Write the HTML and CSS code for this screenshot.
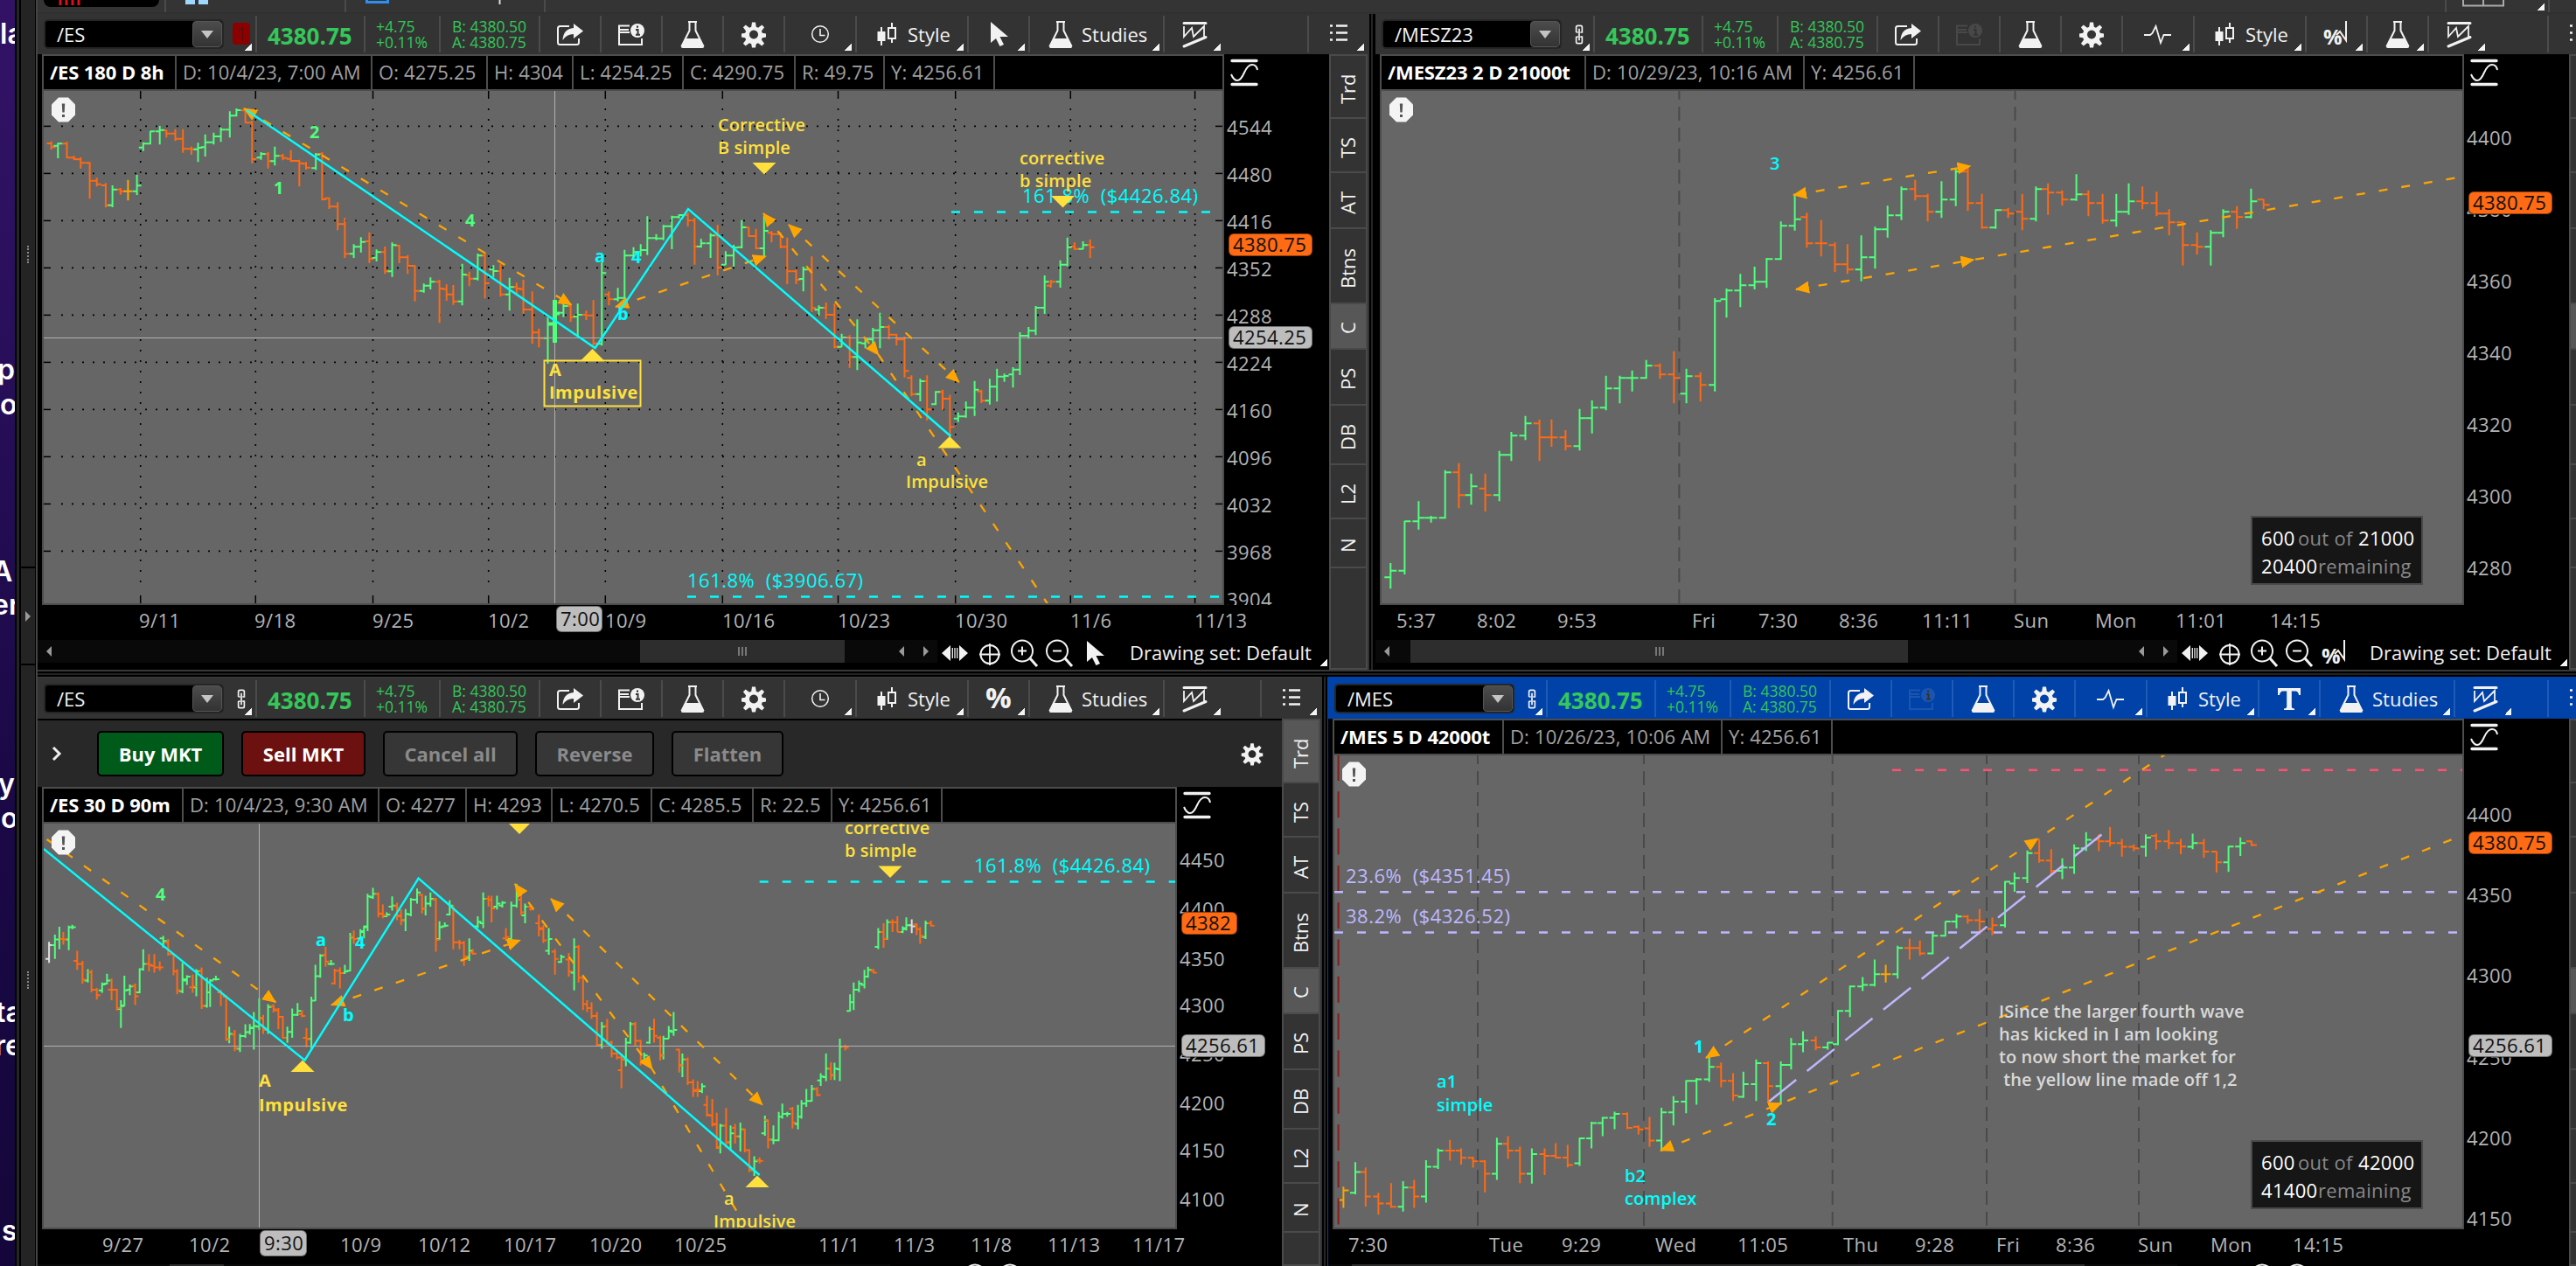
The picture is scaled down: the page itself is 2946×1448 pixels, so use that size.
FILE: index.html
```html
<!DOCTYPE html>
<html lang="en">

<head>
    <meta charset="utf-8">
    <title>Charts</title>
    <link rel="stylesheet" href="styles.css">
</head>

<body>
    <svg class="defs" width="0" height="0">
        <symbol id="i-share" viewBox="0 0 32 32">
            <path d="M15 7H4.500Q2 7 2 9.500V25.500Q2 28 4.500 28H23.500Q26 28 26 25.500V21" fill="none" stroke="currentColor" stroke-width="2" />
            <path d="M20 4L31 12.500L20 21V16Q12 16 7.500 23Q8 10 20 9Z" fill="currentColor" />
        </symbol>
        <symbol id="i-info" viewBox="0 0 32 32">
            <path d="M14 6.500H2V28H28V21M3 11H13M3 14H14" fill="none" stroke="currentColor" stroke-width="2" />
            <circle cx="23" cy="12" r="8" fill="currentColor" />
            <path d="M23 6.500V8.800M21 11H23.500V16.500M21 16.700H26" fill="none" stroke="#333" stroke-width="2" />
        </symbol>
        <symbol id="i-flask" viewBox="0 0 32 32">
            <path d="M11 2H21M12.500 2V12L4 29H28L19.500 12V2" fill="none" stroke="currentColor" stroke-width="2" />
            <path d="M7.500 21H24.500L29 30.500Q29 32 27 32H5Q3 32 3 30.500Z" fill="currentColor" />
        </symbol>
        <symbol id="i-gear" viewBox="0 0 32 32">
            <path fill-rule="evenodd" fill="currentColor" d="M14 2.500h4l.8 5.300 2.200.9 4.300-3.200 2.800 2.800-3.200 4.300.9 2.200 4.200.7v4l-4.200.7-.9 2.200 3.200 4.300-2.800 2.800-4.300-3.200-2.200.9-.8 4.300h-4l-.8-4.300-2.200-.9-4.300 3.200-2.800-2.800 3.200-4.300-.9-2.200-4.200-.7v-4l4.200-.7.9-2.200-3.200-4.300 2.800-2.800 4.300 3.200 2.200-.9zM16 11.500a5 5 0 1 0 .01 0z" />
        </symbol>
        <symbol id="i-clock" viewBox="0 0 32 32">
            <circle cx="16" cy="16" r="9.300" fill="none" stroke="currentColor" stroke-width="1.500" />
            <path d="M16 10V17.500H21.500" fill="none" stroke="currentColor" stroke-width="1.600" />
        </symbol>
        <symbol id="i-pulse" viewBox="0 0 32 32">
            <path d="M0 17H7L9.500 15L13.500 7L19 26L22.500 17H31" fill="none" stroke="currentColor" stroke-width="1.800" />
        </symbol>
        <symbol id="i-candle" viewBox="0 0 24 32">
            <path d="M6 8V29M18 3V9M18 21V26" stroke="currentColor" stroke-width="2" />
            <path d="M1.500 13H10.500V24H1.500Z" fill="currentColor" />
            <path d="M14 9H22V21H14Z" fill="none" stroke="currentColor" stroke-width="2" />
        </symbol>
        <symbol id="i-cursor" viewBox="0 0 32 32">
            <path d="M7 2V26L13 21L17.500 30L22 28L17.500 19H27Z" fill="currentColor" />
        </symbol>
        <symbol id="i-percent" viewBox="0 0 32 32">
            <text x="1" y="27" font-size="33" font-weight="700" fill="currentColor">%</text>
        </symbol>
        <symbol id="i-pctline" viewBox="0 0 32 32">
            <text x="1" y="28" font-size="24" font-weight="700" fill="currentColor">%</text>
            <path d="M16 17L20 13L27 23V1" fill="none" stroke="currentColor" stroke-width="2" />
        </symbol>
        <symbol id="i-text" viewBox="0 0 32 32">
            <path d="M3 4H29V12H27Q26.500 7.500 23 7.500H18.800V25Q18.800 27.500 22 27.500V29H10V27.500Q13.200 27.500 13.200 25V7.500H9Q5.500 7.500 5 12H3Z" fill="currentColor" />
        </symbol>
        <symbol id="i-pattern" viewBox="0 0 32 32">
            <path d="M4 3.500H29M4 30L29 19.500" stroke="currentColor" stroke-width="3" stroke-linecap="round" />
            <path d="M4 7V19L13 9L15 19L27 7V19" fill="none" stroke="currentColor" stroke-width="1.800" />
        </symbol>
        <symbol id="i-list" viewBox="0 0 32 32">
            <path d="M6 6.500H9M13 6.500H26M6 14.500H9M13 14.500H26M6 22.500H9M13 22.500H26" stroke="currentColor" stroke-width="2.500" />
        </symbol>
        <symbol id="i-chain" viewBox="0 0 16 32">
            <path d="M4 13V6Q4 4 6 4H10Q12 4 12 6V13H9.500M4 13H6.500M4 19V26Q4 28 6 28H10Q12 28 12 26V19H9.500M4 19H6.500M8 8V24" fill="none" stroke="currentColor" stroke-width="2" />
        </symbol>
        <symbol id="i-scale" viewBox="0 0 32 32">
            <path d="M2 2.500H30M2 29.500H30" stroke="currentColor" stroke-width="3.400" stroke-linecap="round" />
            <path d="M1 18Q4 25 8 25Q12 25 16 16T25 7Q30 7 31 13" fill="none" stroke="currentColor" stroke-width="2" />
        </symbol>
        <symbol id="i-resize" viewBox="0 0 32 32">
            <path d="M11 7V25L1 16ZM21 7V25L31 16Z" fill="currentColor" />
            <path d="M13.300 10V22M16 10V22M18.700 10V22" stroke="currentColor" stroke-width="1.300" />
        </symbol>
        <symbol id="i-target" viewBox="0 0 32 32">
            <circle cx="16" cy="17.500" r="10.500" fill="none" stroke="currentColor" stroke-width="2" />
            <path d="M16 5V30M4 17.500H28" stroke="currentColor" stroke-width="1.800" />
        </symbol>
        <symbol id="i-zoomin" viewBox="0 0 32 32">
            <circle cx="13" cy="13.500" r="12" fill="none" stroke="currentColor" stroke-width="2" />
            <path d="M22 22L30 31" stroke="currentColor" stroke-width="3" />
            <path d="M8 13.500H18M13 8.500V18.500" stroke="currentColor" stroke-width="2" />
        </symbol>
        <symbol id="i-zoomout" viewBox="0 0 32 32">
            <circle cx="13" cy="13.500" r="12" fill="none" stroke="currentColor" stroke-width="2" />
            <path d="M22 22L30 31" stroke="currentColor" stroke-width="3" />
            <path d="M8 13.500H18" stroke="currentColor" stroke-width="2" />
        </symbol>
        <marker id="arrow" markerUnits="userSpaceOnUse" markerWidth="16" markerHeight="16" viewBox="0 0 16 16" refX="15" refY="8" orient="auto-start-reverse">
            <path d="M0 1L16 8L0 15Z" fill="#ffa500" />
        </marker>
    </svg>

    <div class="screen">
        <svg class="desktop" width="17" height="1448">
            <g id="desktop-text"></g>
        </svg>
        <div class="edge"></div>
        <div class="rail">
            <div class="rail-part rail-a"><i class="dots"></i></div>
            <div class="rail-part rail-b"><i class="arrow"></i></div>
            <div class="rail-part rail-c"><i class="dots"></i></div>
        </div>

        <div class="app">
            <div class="topbar">
                <span class="top-tab"><i class="rec"><svg width="32" height="6"><path d="M5 0V6M12 0V6M19 0V6M26 0V6" stroke="#d11" stroke-width="3" /></svg></i></span>
                <span class="top-cell"><svg width="30" height="6"><path d="M0 0H11V5H0ZM15 0H26V5H15Z" fill="#9fd8ff" /></svg></span>
                <span class="top-cell top-chart"><svg width="160" height="6"><path d="M1.500 -4V2.500H25.500V-4" fill="none" stroke="#2f8ff0" stroke-width="3" /><path d="M153.500 0V5" stroke="#ddd" stroke-width="2" /></svg></span>
                <span class="top-cell top-fill"></span>
                <span class="top-cell top-grid"><svg width="50" height="8"><path d="M1 0V6.500H47V0M24 0V6" fill="none" stroke="#aaa" stroke-width="2" /></svg><i class="tri"></i></span>
                <span class="top-cell top-last"></span>
            </div>
            <div class="row row-top">
                <section class="panel p1" id="p1"></section>
                <div class="gutter"></div>
                <section class="panel p2" id="p2"></section>
            </div>
            <div class="split"></div>
            <div class="row row-bottom">
                <section class="panel p3" id="p3"></section>
                <div class="gutter"></div>
                <section class="panel p4 active" id="p4"></section>
            </div>
        </div>
    </div>

    <script src="charts.js"></script>
</body>

</html>
```

FILE: styles.css
```css
* {
    box-sizing: border-box;
}

body {
    margin: 0;
    background: #000;
    color: #f2f2f2;
    font-family: "Open Sans", "Noto Sans", sans-serif;
    font-size: 22px;
    overflow: hidden;
}

.defs {
    position: absolute;
}

.screen {
    display: flex;
    width: 2946px;
    height: 1448px;
    overflow: hidden;
}

.desktop {
    flex: none;
    background: linear-gradient(#331266, #2a0f5c 25%, #1b0947 60%, #14063a);
    font-family: Inter, sans-serif;
    font-weight: 600;
    font-size: 32px;
    fill: #fff;
}

.edge {
    flex: none;
    width: 7px;
    background: #252525;
    border: solid #000;
    border-width: 0 2px;
}

/* narrow sidebar grips */
.rail {
    flex: none;
    width: 17px;
    padding-right: 1px;
    display: flex;
    flex-direction: column;
    gap: 2px;
    background: #000;
}

.rail-part {
    background: #242424;
    display: flex;
    justify-content: center;
}

.rail-a { height: 648px; padding-top: 281px; }
.rail-b { height: 109px; padding-top: 49px; }
.rail-c { flex: 1; padding-top: 350px; }

.dots {
    height: 20px;
    border-left: 2px dotted #888;
}

.arrow {
    border: 6px solid transparent;
    border-left-color: #999;
    border-right-width: 0;
    height: 12px;
}

.app {
    flex: 1;
    min-width: 0;
    border-left: 2px solid #444;
    display: flex;
    flex-direction: column;
}

.topbar {
    flex: none;
    height: 16px;
    display: flex;
    background: #343434;
    border-bottom: 2px solid #303030;
}

.topbar svg {
    display: block;
}

.top-tab {
    width: 145px;
    padding-left: 7px;
}

.rec {
    display: block;
    width: 132px;
    height: 8px;
    background: #000;
    border-radius: 0 0 8px 8px;
    padding-left: 14px;
}

.top-cell {
    position: relative;
    border-left: 2px solid #4a4a4a;
    width: 206px;
    padding-left: 22px;
}

.top-chart { width: 228px; }
.top-fill { width: 2174px; }
.top-grid { width: 118px; padding-left: 18px; }
.top-last { flex: 1; }

.row {
    display: flex;
}

.row-top { height: 750px; }
.row-bottom { height: 674px; }

.split {
    height: 8px;
    background: linear-gradient(#383838 2px, #000 2px, #000 4px, #222 4px, #222 6px, #000 6px);
}

.gutter {
    flex: none;
    width: 9px;
    background: linear-gradient(90deg, #333 2px, #000 2px, #000 4px, #252525 4px, #252525 6px, #000 6px);
}

.panel {
    flex: none;
    display: flex;
    flex-direction: column;
    overflow: hidden;
    background: #000;
}

.p1 { width: 1521px; }
.p2 { width: 1373px; }
.p3 { width: 1467px; }
.p4 { width: 1427px; }

.active {
    border-left: 1px solid #0042a8;
    margin-left: -1px;
    width: 1428px;
}

/* toolbar */
.toolbar {
    flex: none;
    display: flex;
    height: 46px;
    padding: 2px 0;
    background: #333;
}

/* the right hand panels run off the screen */
.p2 .toolbar { width: 1409px; }
.p4 .toolbar { width: 1463px; }

.row-bottom .toolbar {
    height: 48px;
    border-top: 1px solid #3c3c3c;
    padding-top: 3px;
}

.active .toolbar {
    background: #0042a8;
    border-color: #0042a8;
}

.cell {
    position: relative;
    flex: none;
    width: 70px;
    border-left: 2px solid #4b4b4b;
    display: flex;
    align-items: center;
    justify-content: center;
    white-space: nowrap;
}

.active .cell {
    border-color: #1f5ab5;
}

.cell svg {
    width: 32px;
    height: 32px;
}

.cell.sym {
    width: 249px;
    border: 0;
    padding: 4px 0 4px 7px;
    justify-content: flex-start;
    align-items: stretch;
}

.field {
    width: 206px;
    background: #000;
    border: 2px solid #262626;
    border-radius: 5px;
    padding-left: 13px;
    display: flex;
    justify-content: space-between;
    align-items: center;
}

.drop {
    width: 34px;
    height: 30px;
    border: 1px solid #555;
    border-radius: 4px;
    background: linear-gradient(#4c4c4c, #333);
    display: flex;
    align-items: center;
    justify-content: center;
}

.drop::after {
    content: "";
    border: 7.500px solid transparent;
    border-top: 9px solid #c4c4c4;
    border-bottom: 0;
}

.link {
    width: 20px;
    margin: 4px 0 5px 10px;
}

.cell .link svg {
    width: 14px;
    height: 27px;
    margin-left: 3px;
    display: block;
}

.link.red {
    background: #8c0000;
    border-radius: 4px;
    color: #5a1010;
    text-align: center;
    line-height: 24px;
}

.tri {
    position: absolute;
    right: 4px;
    bottom: 2px;
    width: 8px;
    height: 8px;
    background: linear-gradient(135deg, transparent 50%, #f4f4f4 50%);
}

.cell.price {
    width: 124px;
    font-size: 26px;
    font-weight: 700;
    color: #35c759;
    padding-top: 3px;
    justify-content: flex-start;
    padding-left: 12px;
}

.cell.quote {
    width: 86px;
    padding-left: 12px;
    justify-content: flex-start;
    font-size: 17.500px;
    line-height: 18px;
    color: #35c759;
}

.cell.bid { width: 114px; padding-left: 13px; }
.cell.off { color: #484848; }
.active .cell.off { color: #1c55b0; }
.cell.mode { width: 82px; }

.cell.style {
    width: 128px;
    justify-content: flex-start;
    padding-left: 22px;
    gap: 12px;
}

.cell.style svg {
    width: 24px;
}

.cell.studies {
    width: 154px;
    justify-content: flex-start;
    padding-left: 19px;
    gap: 8px;
}

.spacer {
    flex: 1;
}

.cell.list { width: 69px; }

/* order entry */
.orders {
    flex: none;
    display: flex;
    align-items: center;
    height: 78px;
    background: #282828;
    border-top: 2px solid #000;
    padding: 0 20px 0 16px;
    gap: 20px;
}

.orders .chev {
    width: 32px;
}

.btn {
    height: 52px;
    border: 2px solid #000;
    border-radius: 5px;
    display: flex;
    align-items: center;
    justify-content: center;
    font-weight: 700;
    background: #363636;
    color: #8a8a8a;
    width: 154px;
}

.buy { background: #005a1a; color: #fff; width: 145px; }
.sell { background: #6c1010; color: #fff; width: 142px; }
.reverse { width: 136px; }
.flatten { width: 128px; }

.orders .gear {
    width: 28px;
    height: 28px;
    margin-left: auto;
}

.body {
    flex: 1;
    display: flex;
    min-height: 0;
}

.main {
    flex: 1;
    min-width: 0;
    display: flex;
    flex-direction: column;
}

.p2 .main { flex: none; width: 1365px; }
.p4 .main { flex: none; width: 1419px; }

.head {
    flex: none;
    display: flex;
    justify-content: space-between;
    height: 42px;
    padding-left: 5px;
}

.legend {
    flex: 1;
    display: flex;
    border: 2px solid #4d4d4d;
    color: #a0a0a0;
}

.legend span {
    border-right: 2px solid #4d4d4d;
    padding-left: 7px;
    line-height: 36px;
    white-space: nowrap;
    letter-spacing: .15px;
}

.legend span:first-child {
    color: #fff;
    font-weight: 700;
    letter-spacing: -.1px;
}

.scale {
    width: 120px;
    padding: 5px 0 0 7px;
}

.scale svg {
    width: 32px;
    height: 32px;
    display: block;
}

.plot {
    flex: none;
    display: block;
    margin-left: 5px;
}

.axis-text {
    letter-spacing: .42px;
    fill: #b4b4b4;
}

.level {
    letter-spacing: .5px;
}

.note {
    font-size: 20px;
    font-weight: 600;
    letter-spacing: .08px;
}

.strong {
    font-weight: 700;
    letter-spacing: .5px;
}

.foot {
    flex: none;
    display: flex;
    height: 34px;
}

.scrollbar {
    position: relative;
    flex: 1;
    height: 26px;
    background: #090909;
}

.thumb {
    height: 26px;
    background: #2d2d2d;
    display: flex;
    align-items: center;
    justify-content: center;
    gap: 2px;
}

.thumb i {
    width: 2px;
    height: 10px;
    background: #777;
}

.sb {
    position: absolute;
    top: 7px;
    border: 6px solid transparent;
    border-left-width: 0;
    border-right-color: #999;
}

.sb-first { left: 10px; }
.sb-prev { right: 38px; }
.sb-next { right: 10px; transform: scaleX(-1); }

.tools {
    display: flex;
    position: relative;
    width: 448px;
    height: 34px;
}

.tools svg {
    width: 32px;
    height: 32px;
    margin: -1px 4px;
}

.tools span {
    margin-left: 20px;
    line-height: 28px;
}

.tools .tri {
    right: 2px;
    bottom: 4px;
}

/* vertical tabs */
.tabs {
    flex: none;
    width: 44px;
    background: #333;
    border: 2px solid #4a4a4a;
}

.tab {
    border-top: 2px solid #4a4a4a;
    writing-mode: vertical-rl;
    transform: rotate(180deg);
    width: 40px;
    line-height: 38px;
    text-align: center;
    padding-bottom: 8px;
}

/* rotated, so bottom padding pushes the label down */
.tab {
    padding-bottom: 0;
    padding-top: 0;
    text-indent: -5px;
}

.tab.on { background: #575757; }
.t72 { height: 72px; }
.t62 { height: 62px; }
.t64 { height: 64px; }
.t86 { height: 86px; }
.t52 { height: 52px; }
.t68 { height: 68px; }
.t56 { height: 56px; }
```

FILE: charts.js
```js
var COLORS = { g: '#50ff7d', o: '#ff6a14', y: '#ffa500', w: '#dddddd' };
var YEL = '#ffe03c', CY = '#00ffff', GR = '#50ff7d', LAV = '#bdb8ff', ORG = '#ffa500';

function icon(name) {
    return '<svg><use href="#i-' + name + '"/></svg>';
}

function cell(cls, html, tri) {
    return '<div class="cell ' + cls + '">' + html + (tri ? '<i class="tri"></i>' : '') + '</div>';
}

function toolbar(p) {
    var link = p.red ? '<span class="link red">1</span>' : '<span class="link">' + icon('chain') + '</span>';
    return '<div class="toolbar">' +
        cell('sym', '<div class="field">' + p.symbol + '<i class="drop"></i></div>' + link, true) +
        cell('price', '4380.75') +
        cell('quote', '+4.75<br>+0.11%') +
        cell('quote bid', 'B: 4380.50<br>A: 4380.75') +
        cell('', icon('share')) +
        cell(p.info ? '' : 'off', icon('info')) +
        cell('', icon('flask')) +
        cell('', icon('gear')) +
        cell('mode', icon(p.mode), true) +
        cell('style', icon('candle') + 'Style', true) +
        cell('', icon(p.tool), true) +
        (p.studies ? cell('studies', icon('flask') + 'Studies', true) : cell('', icon('flask'), true)) +
        cell('', icon('pattern'), true) +
        '<div class="spacer"></div>' +
        cell('list', icon('list'), true) +
        '</div>';
}

// bars: "colour x high low open close", one run shares an origin and a scale
function drawBars(runs, tick) {
    var paths = {};
    runs.forEach(function (run) {
        run.bars.trim().split(/\s*[;\n]\s*/).forEach(function (line) {
            var v = line.split(' ');
            if (v.length < 6) return;
            var x = (run.x + v[1] / run.sx).toFixed(1) * 1;
            var y = v.slice(2).map(function (n) { return (run.y + n / run.sy).toFixed(1) * 1; });
            paths[v[0]] = (paths[v[0]] || '') + 'M' + x + ' ' + y[0] + 'V' + y[1] +
                'M' + (x - tick) + ' ' + y[2] + 'H' + x + 'M' + x + ' ' + y[3] + 'H' + (x + tick);
        });
    });
    return Object.keys(paths).map(function (k) {
        return '<path d="' + paths[k] + '" fill="none" stroke="' + COLORS[k] + '" stroke-width="2"/>';
    }).join('');
}

function line(x1, y1, x2, y2, color, w, extra) {
    return '<line x1="' + x1 + '" y1="' + y1 + '" x2="' + x2 + '" y2="' + y2 + '" stroke="' + color +
        '" stroke-width="' + w + '" ' + (extra || '') + '/>';
}

function dashed(x1, y1, x2, y2, color) {
    return line(x1, y1, x2, y2, color, 2.5, 'stroke-dasharray="10 16"');
}

// trend line with a head at both ends, optionally extended to the right
function trend(x1, y1, x2, y2, ex, ey) {
    return line(x1, y1, x2, y2, ORG, 2.3, 'stroke-dasharray="10 16" marker-start="url(#arrow)" marker-end="url(#arrow)"') +
        (ex ? line(x2, y2, ex, ey, ORG, 2.3, 'stroke-dasharray="10 16" stroke-dashoffset="' + Math.hypot(x2 - x1, y2 - y1).toFixed(1) + '"') : '');
}

function text(x, y, s, color, cls) {
    return '<text x="' + x + '" y="' + y + '" fill="' + color + '" class="' + (cls || '') + '" xml:space="preserve">' + s + '</text>';
}

function level(x, y, s, color) {
    return text(x, y, s, color, 'level');
}

function note(x, y, s, color, bold) {
    return text(x, y, s, color, 'note' + (bold ? ' strong' : ''));
}

function poly(pts, color) {
    return '<polyline points="' + pts + '" fill="none" stroke="' + color + '" stroke-width="2.4"/>';
}

// yellow markers, (x, y) is the tip
function up(x, y) {
    return '<path d="M' + x + ' ' + y + 'l13.500 13.500h-27z" fill="' + YEL + '"/>';
}

function down(x, y) {
    return '<path d="M' + x + ' ' + y + 'l13.500 -13.500h-27z" fill="' + YEL + '"/>';
}

function badge(x, y, w, h, s, color) {
    return '<rect x="' + (x + 1) + '" y="' + (y + 1) + '" width="' + (w - 2) + '" height="' + (h - 2) + '" rx="6" fill="' + color +
        '" stroke="#0006" stroke-width="2"/><text x="' + (x + 6) + '" y="' + (y + h / 2 + 8) + '" fill="#111" letter-spacing=".42">' + s + '</text>';
}

function remaining(x, y, total, left) {
    return '<rect x="' + (x + 1) + '" y="' + (y + 1) + '" width="195" height="77" fill="#161616" stroke="#4a4a4a" stroke-width="2"/>' +
        '<g letter-spacing=".3">' +
        text(x + 12, y + 34, '600', '#fff') + text(x + 54, y + 34, 'out of', '#888') + text(x + 123, y + 34, total, '#fff') +
        text(x + 12, y + 66, left, '#fff') + text(x + 77, y + 66, 'remaining', '#888') + '</g>';
}

function plot(p) {
    var b = p.box, out = '', w = b.r - b.x, h = b.b - b.y;
    out += '<rect x="' + (b.x - 2) + '" y="' + (b.y - 2) + '" width="' + (w + 4) + '" height="' + (h + 4) + '" fill="#4d4d4d"/>';
    out += '<svg x="' + b.x + '" y="' + b.y + '" width="' + w + '" height="' + h + '" viewBox="' + [b.x, b.y, w, h].join(' ') + '">';
    out += '<rect x="' + b.x + '" y="' + b.y + '" width="' + w + '" height="' + h + '" fill="#666"/>';
    (p.gridX || []).forEach(function (x) {
        out += line(x, b.y, x, b.y + 9, '#000', 1.5) + line(x, b.b - 9, x, b.b, '#000', 1.5) +
            line(x, b.y + 20, x, b.b - 14, '#000', 1.6, 'stroke-dasharray="2 10"');
    });
    (p.gridY || []).forEach(function (y) {
        out += line(b.x, y, b.x + 8, y, '#000', 1.5) + line(b.r - 8, y, b.r, y, '#000', 1.5) +
            line(b.x + 20, y, b.r - 20, y, '#000', 1.6, 'stroke-dasharray="2 10"');
    });
    (p.days || []).forEach(function (x) {
        out += line(x, b.y, x, b.b, '#4a4a4a', 2, 'stroke-dasharray="16 8" stroke-dashoffset="6"');
    });
    out += drawBars(p.runs, p.tick);
    if (p.cross) {
        out += line(p.cross[0], b.y, p.cross[0], b.b, '#b0b0b0', 1) + line(b.x, p.cross[1], b.r, p.cross[1], '#b0b0b0', 1);
    }
    out += p.drawings;
    // alert octagon
    out += '<g transform="translate(' + (b.x + 9) + ' ' + (b.y + 7.5) + ')"><path d="M8 0H19L27 8V20L19 28H8L0 20V8Z" fill="#f4f4f4"/>' +
        '<path d="M11.800 7H15.200L14.700 17H12.300ZM12 19.500H15V22.500H12Z" fill="#555"/></g>';
    out += '</svg><g class="axis-text">';
    // last y label can run past the plot, so keep it inside the price axis
    out += '<svg x="' + b.r + '" y="' + b.y + '" width="140" height="' + (h + 2) + '" viewBox="' + [b.r, b.y, 140, h + 2].join(' ') + '">';
    p.yLabels.forEach(function (l) {
        out += '<text x="' + (b.r + 5) + '" y="' + (l[1] + 8) + '">' + l[0] + '</text>';
    });
    out += '</svg>';
    p.xLabels.forEach(function (l) {
        out += '<text x="' + (l[1] - 1) + '" y="' + (b.b + 28) + '">' + l[0] + '</text>';
    });
    out += '</g>' + p.badges;
    var W = p.right - b.x + 2, H = h + 42;
    return '<svg class="plot" width="' + W + '" height="' + H + '" viewBox="' + [b.x - 2, b.y, W, H].join(' ') + '">' + out + '</svg>';
}

function tabs(on) {
    var sizes = { Trd: 72, TS: 62, AT: 64, Btns: 86, C: 52, PS: 64, DB: 68, L2: 62, N: 56 };
    return '<div class="tabs">' + Object.keys(sizes).map(function (k) {
        return '<div class="tab t' + sizes[k] + (on.indexOf(k) > -1 ? ' on' : '') + '">' + k + '</div>';
    }).join('') + '</div>';
}

function render(id, p) {
    var legend = p.legend.map(function (l) {
        return '<span style="width:' + l[1] + 'px">' + l[0] + '</span>';
    }).join('');
    document.getElementById(id).innerHTML = toolbar(p) +
        '<div class="body"><div class="main">' +
        (p.orders ? '<div class="orders"><svg class="chev" height="20"><path d="M2 3L9 10L2 17" fill="none" stroke="#eee" stroke-width="3"/></svg>' +
            '<div class="btn buy">Buy MKT</div><div class="btn sell">Sell MKT</div><div class="btn">Cancel all</div>' +
            '<div class="btn reverse">Reverse</div><div class="btn flatten">Flatten</div><svg class="gear"><use href="#i-gear"/></svg></div>' : '') +
        '<div class="head"><div class="legend">' + legend + '</div><div class="scale">' + icon('scale') + '</div></div>' +
        plot(p) +
        '<div class="foot"><div class="scrollbar"><i class="sb sb-first"></i><div class="thumb" style="margin-left:' + p.thumb[0] + 'px;width:' + p.thumb[1] +
        'px"><i></i><i></i><i></i></div><i class="sb sb-prev"></i><i class="sb sb-next"></i></div>' +
        '<div class="tools">' + icon('resize') + icon('target') + icon('zoomin') + icon('zoomout') + icon(p.tool) +
        '<span>Drawing set: Default</span><i class="tri"></i></div></div>' +
        '</div>' + tabs(p.on) + '</div>';
}

render('p1', {
    symbol: '/ES', red: true, info: true, mode: 'clock', tool: 'cursor', studies: true, on: ['C'],
    legend: [['/ES 180 D 8h', 152], ['D: 10/4/23, 7:00 AM', 224], ['O: 4275.25', 132], ['H: 4304', 98], ['L: 4254.25', 126], ['C: 4290.75', 128], ['R: 49.75', 102], ['Y: 4256.61', 126]],
    box: { x: 50, y: 104, r: 1398, b: 690 }, right: 1520, tick: 5, thumb: [689, 234],
    gridX: [160.7, 292.3, 426.5, 558.7, 692.3, 826.3, 958.5, 1092.7, 1224.3, 1366.6],
    gridY: [144.4, 198.4, 252.4, 306.4, 360.4, 414.4, 468.4, 522.4, 576.4, 630.4],
    cross: [634.5, 386.5],
    runs: [
        { x: 0, y: 0, sx: 1.96, sy: 3, bars: `
o 115 485 513 492 505; g 130 490 543 500 493; o 150 487 543 493 541; o 166 535 550 541 546; o 181 540 578 547 559; o 201 556 682 559 620
o 217 610 640 620 632; o 237 628 712 636 704; g 252 636 711 704 650; o 270 645 668 650 656; y 287 617 688 656 656; g 307 600 669 656 637
g 321 488 518 506 493; g 337 450 496 493 451; g 358 432 496 451 446; o 373 445 472 447 458; o 393 443 484 458 476; o 410 443 524 476 511
o 429 503 531 511 512; g 444 490 556 512 507; g 460 461 537 505 488; g 479 455 496 488 468; g 495 437 487 468 445; g 515 382 472 445 397
g 530 372 400 397 378; o 550 376 422 379 421; o 565 415 560 421 546; g 585 522 548 541 528; o 601 522 578 529 553; g 616 503 568 553 535
o 634 528 550 535 542; o 652 515 556 545 552; o 671 548 640 552 560; o 686 556 582 562 575; g 708 525 583 577 530; o 722 522 688 528 684
o 738 677 717 680 709; o 757 694 790 709 769; o 773 748 885 769 871; g 793 838 885 871 847; g 809 814 866 847 830; o 828 797 903 828 888
g 844 856 897 884 865; o 863 846 940 865 931; g 879 832 950 931 841; o 895 840 903 843 883; o 914 875 940 883 912; o 930 910 1034 912 998
g 950 973 1004 998 980; g 965 952 993 980 967; o 985 960 1108 967 990; o 1001 976 1032 992 1010; o 1016 978 1046 1010 1034; g 1036 905 1048 1034 942
o 1052 932 982 944 956; g 1071 870 962 956 877; o 1087 868 1024 877 972; g 1106 910 950 925 930; o 1122 905 1018 930 1010; g 1142 953 1066 1010 985
o 1158 970 1010 985 990; o 1173 960 1076 992 1062; o 1193 1000 1180 1062 1141; o 1208 1127 1192 1141 1160; g 1228 1090 1248 1160 1112
g 1263 1040 1088 1073 1050; o 1279 1040 1105 1050 1088; g 1295 1042 1155 1086 1080; o 1314 1066 1098 1080 1082; o 1330 1030 1185 1082 1178
g 1349 900 1186 1180 937; o 1365 1000 1048 1010 1027; g 1385 988 1034 1027 1022; g 1400 857 1040 1022 877; g 1420 848 885 877 865
g 1436 838 880 865 858; g 1451 742 875 858 817; g 1471 803 824 817 818; g 1487 772 824 818 776; g 1506 740 855 776 745; g 1522 736 750 745 738
o 1542 730 777 738 757; o 1557 748 908 757 846` },
        { x: 760, y: 0, sx: 1.96, sy: 3, bars: `
g 82 820 850 846 835; g 103 800 885 835 808; o 119 772 945 808 918; g 137 862 910 908 877; g 155 840 915 877 850; g 173 755 852 848 780
o 189 780 812 780 810; o 205 785 855 810 852; g 223 740 885 852 792; o 240 793 832 799 803; o 260 797 852 803 847; o 275 815 975 847 931
o 295 925 975 931 960; g 311 915 1000 957 925; o 330 880 1070 925 1057; g 346 1048 1083 1063 1056; o 362 1038 1094 1056 1080
o 381 1042 1195 1080 1190; g 397 1145 1190 1190 1158; o 415 1150 1262 1158 1225; g 432 1096 1270 1225 1175; g 450 1160 1195 1178 1165
g 467 1125 1180 1165 1133; g 483 1073 1195 1133 1122; o 503 1115 1165 1122 1148; o 520 1145 1185 1148 1165; o 538 1155 1295 1165 1273
g 816 1122 1162 1152 1135; g 832 1050 1150 1135 1056; g 852 945 1077 1056 967; o 866 960 987 980 967; g 887 893 987 967 908
g 903 815 914 908 848; o 919 832 858 846 854; g 938 828 856 854 841; o 954 822 885 841 848` },
        { x: 760, y: 400, sx: 1.912, sy: 3, bars: `
o 540 88 160 97 152; g 559 100 177 152 108; o 574 88 243 108 205; g 593 142 190 187 145; o 608 137 207 145 168; o 624 155 297 168 265
g 642 215 248 236 229; g 659 178 233 229 199; g 678 107 227 199 137; o 693 137 183 143 175; g 711 100 188 175 127; g 727 65 178 127 92
g 743 82 110 92 90; g 762 60 130 85 68; g 777 -60 87 68 -48` }
    ],
    drawings: line(634.5, 343, 634.5, 392, GR, 5) + line(627, 370.5, 634, 370.5, GR, 4) + line(634, 358.5, 640, 358.5, GR, 4) +
        level(1169, 232, '161.8%  ($4426.84)', CY) + dashed(1088, 242.4, 1385, 242.4, CY) +
        level(786, 671.5, '161.8%  ($3906.67)', CY) + dashed(786, 682.4, 1398, 682.4, CY) +
        trend(279, 124, 653.6, 348.7) + trend(704, 351, 876, 293) + trend(873, 244, 1004.8, 406, 1199, 692) + trend(902, 257, 1096.8, 437) +
        poly('282,126 680.6,398 787,239 1087.4,499', CY) +
        down(874, 199.5) + down(1215.5, 237.5) + up(677.5, 399) + up(1086, 499) +
        '<rect x="622.500" y="412.500" width="110" height="52" fill="none" stroke="' + YEL + '" stroke-width="2"/>' +
        note(628, 430, 'A', YEL, 1) + note(628, 456, 'Impulsive', YEL, 1) + note(1048, 532.5, 'a', YEL) + note(1036, 558, 'Impulsive', YEL) +
        note(821, 150, 'Corrective', YEL) + note(821, 176, 'B simple', YEL) + note(1166, 188, 'corrective', YEL) + note(1166, 214, 'b simple', YEL) +
        note(354, 158, '2', GR, 1) + note(313, 222, '1', GR, 1) + note(532, 259, '4', GR, 1) +
        note(680, 300, 'a', CY, 1) + note(722, 301, '4', CY, 1) + note(706, 366, 'b', CY, 1),
    yLabels: [[4544, 146], [4480, 200], [4416, 254], [4352, 308], [4288, 362], [4224, 416], [4160, 470], [4096, 524], [4032, 578], [3968, 632], [3904, 686]],
    xLabels: [['9/11', 160], ['9/18', 292], ['9/25', 427], ['10/2', 559], ['10/9', 693], ['10/16', 827], ['10/23', 959], ['10/30', 1093], ['11/6', 1225], ['11/13', 1367]],
    badges: badge(1404, 266, 98, 28, '4380.75', '#ff6a14') + badge(1404, 372, 98, 28, '4254.25', '#bdbdbd') + badge(635, 692, 55, 32, '7:00', '#bdbdbd')
});

render('p2', {
    symbol: '/MESZ23', mode: 'pulse', tool: 'pctline', on: ['C'],
    legend: [['/MESZ23 2 D 21000t', 234], ['D: 10/29/23, 10:16 AM', 250], ['Y: 4256.61', 126]],
    box: { x: 1580, y: 104, r: 2816, b: 690 }, right: 2938, tick: 7, thumb: [40, 569],
    days: [1920.4, 2304.5],
    runs: [
        { x: 1570, y: 380, sx: 2.613, sy: 3, bars: `
g 53 792 880 841 818; g 95 647 831 818 649; g 137 580 677 649 637; g 174 630 653 637 637; g 216 473 640 637 481; o 257 449 604 481 559
g 294 485 592 559 529; o 336 485 615 536 559; g 378 407 580 559 421; g 414 342 442 421 355; g 456 287 370 355 313; o 498 299 442 313 361
o 534 299 393 361 361; o 576 336 406 361 391; g 618 263 406 391 295; g 655 234 347 295 259; g 697 149 268 259 193; g 738 149 244 193 157
g 775 131 203 157 157; g 817 95 160 157 115; o 858 107 160 115 145; o 900 65 244 145 157; g 937 125 244 211 151; o 979 137 238 151 181` },
        { x: 1500, y: 0, sx: 1.96, sy: 3, bars: `
g 904 1023 1343 1321 1033; g 930 990 1090 1027 997; g 961 940 1054 997 979; g 993 915 993 979 967; g 1020 885 988 967 889; g 1052 760 892 889 775
g 1083 670 791 775 752; o 1110 730 850 745 835; o 1142 755 880 835 835; o 1173 832 934 841 907; o 1201 838 940 907 925; g 1232 808 965 925 883
g 1263 778 922 883 787; g 1291 706 815 787 739; g 1322 640 755 739 649; o 1353 617 688 649 673; o 1381 665 760 673 727; g 1412 622 748 727 685
g 1444 580 707 685 589; o 1471 570 724 589 697` },
        { x: 2200, y: 0, sx: 2.102, sy: 3, bars: `
o 140 665 785 697 781; g 173 718 785 781 721; o 203 713 748 721 733; o 237 665 790 727 751; g 270 640 760 751 649; o 299 629 737 649 661
o 333 653 706 661 685; g 367 598 689 685 667; o 396 653 742 667 697; o 430 665 767 697 757; g 463 665 778 757 727; g 493 629 737 727 691
o 526 640 718 691 697; o 560 658 742 697 733; o 590 718 808 733 763; o 623 760 911 763 841; o 657 797 874 841 847; g 690 790 911 847 799
g 720 718 814 799 727; o 753 707 785 727 745; g 787 647 749 745 691; o 817 683 717 685 703` }
    ],
    drawings: trend(2051, 223, 2253.6, 190) + trend(2054, 331, 2257.6, 297, 2811, 203) + note(2024, 194, '3', CY) +
        remaining(2574, 590, '21000', '20400'),
    yLabels: [[4400, 158], [4380, 240], [4360, 322], [4340, 404], [4320, 486], [4300, 568], [4280, 650]],
    xLabels: [['5:37', 1598], ['8:02', 1690], ['9:53', 1782], ['Fri', 1936], ['7:30', 2012], ['8:36', 2104], ['11:11', 2199], ['Sun', 2304], ['Mon', 2397], ['11:01', 2489], ['14:15', 2597]],
    badges: badge(2822, 218, 98, 28, '4380.75', '#ff6a14')
});

render('p3', {
    symbol: '/ES', info: true, mode: 'clock', tool: 'percent', studies: true, orders: true, on: ['Trd', 'C'],
    legend: [['/ES 30 D 90m', 160], ['D: 10/4/23, 9:30 AM', 224], ['O: 4277', 100], ['H: 4293', 98], ['L: 4270.5', 114], ['C: 4285.5', 116], ['R: 22.5', 90], ['Y: 4256.61', 126]],
    box: { x: 50, y: 942, r: 1344, b: 1404 }, right: 1466, tick: 4, thumb: [151, 62],
    cross: [296.5, 1196.5],
    runs: [
        { x: 0, y: 740, sx: 1.96, sy: 2.215, bars: `
w 110 747 800 790 755; g 123 729 790 755 741; g 133 709 766 741 740; o 142 722 754 740 741; g 154 706 768 741 710; g 162 704 715 710 710
o 173 770 818 795 803; o 185 795 853 803 843; g 197 816 850 845 824; o 205 818 875 824 868; o 217 864 893 868 882; g 229 850 876 870 855
g 240 828 855 853 845; o 250 840 895 868 868; o 262 866 921 868 915; g 271 895 965 917 910; g 279 833 910 908 870; g 291 855 882 868 860
o 303 853 907 858 885; g 313 814 877 875 816; g 321 766 820 816 803; o 334 778 822 803 805; o 346 778 825 808 812; o 358 797 820 812 812
g 366 732 762 738 745; o 377 740 782 748 778; o 389 776 832 778 822; o 397 816 880 822 870; g 409 800 877 872 842; g 419 832 856 845 835
o 432 830 876 862 860; g 440 816 885 862 822; o 452 812 917 820 909; g 464 838 914 909 875; g 471 842 912 875 845; g 484 833 845 842 842
o 495 868 910 875 880; o 507 882 998 886 994; g 514 962 1004 994 980; o 526 970 1024 982 1016; g 538 980 1026 1018 986; g 550 956 990 986 976
g 560 955 982 976 966; g 569 925 1020 964 960; g 581 890 970 962 940; o 590 932 980 940 970; g 601 905 980 970 912; o 613 905 926 910 918
o 624 915 968 921 937; o 634 935 992 937 990; g 644 962 1003 990 975; g 655 916 990 975 932; g 667 902 935 932 922; o 677 920 938 930 935
o 687 965 1014 990 993; g 698 886 1022 993 896; g 707 805 897 896 834; g 718 778 838 834 782; o 730 760 810 780 797; g 742 793 806 803 803
o 750 815 855 852 820; o 762 812 865 820 826; g 773 805 828 826 822; g 785 724 822 820 736; o 793 718 752 734 740; g 808 715 740 738 722
g 816 706 738 720 710; g 824 625 720 708 632; g 836 610 638 634 625; o 848 622 685 626 675; o 858 652 687 676 680; g 867 672 684 682 678
g 879 632 668 658 655; o 890 648 692 657 682; o 899 665 705 680 692; g 909 664 720 692 676; g 921 636 682 678 640; g 935 612 650 640 622
o 946 625 675 628 663; g 954 630 680 663 650; g 965 622 658 650 638; o 977 636 772 640 742; g 985 695 742 740 710; g 997 698 710 708 706
g 1008 642 680 678 655; o 1016 655 766 658 748; o 1030 742 766 748 750; o 1040 745 808 750 785; g 1052 738 795 785 770; o 1060 765 780 774 777
g 1071 682 712 708 696; g 1083 622 712 700 638; o 1095 630 658 638 640; o 1102 630 698 640 662; g 1114 630 665 658 650; g 1126 644 660 655 648
o 1134 712 745 738 735; g 1146 645 745 740 655; g 1158 600 660 655 615; o 1168 610 680 640 672; g 1177 650 700 680 658; o 1189 652 668 658 665
o 1208 678 733 700 712; o 1218 705 750 715 743; g 1230 712 780 770 740; o 1244 765 830 772 790; g 1258 780 800 798 785; o 1275 775 835 792 822
g 1287 738 870 825 760; o 1297 755 850 760 838; o 1307 836 920 838 905; o 1316 895 925 905 915; o 1326 900 942 915 935; o 1338 925 1010 935 1008
g 1349 950 1018 1008 962; o 1361 942 1008 960 1002; o 1371 998 1040 1002 1030; o 1383 1020 1045 1030 1040; o 1393 1030 1118 1072 1045
g 1403 990 1062 1045 1002; g 1413 950 1005 1002 955; o 1424 950 1010 955 998; o 1436 995 1060 998 1052; g 1444 1028 1052 1048 1035
g 1456 962 1005 1002 968; o 1466 942 1002 968 985; o 1480 985 1048 990 1035; g 1487 985 1045 1035 992; g 1499 960 992 992 972; g 1510 925 985 975 970` },
        { x: 760, y: 740, sx: 1.96, sy: 2.215, bars: `
o 33 1018 1078 1020 1060; g 40 1030 1090 1060 1045; o 52 1040 1110 1045 1103; o 64 1095 1140 1103 1125; o 74 1100 1140 1122 1122
g 84 1105 1130 1125 1113; o 95 1137 1190 1160 1185; o 107 1145 1215 1187 1208; o 117 1180 1272 1210 1268; g 125 1208 1283 1268 1213
o 138 1168 1268 1213 1255; g 148 1212 1272 1255 1232; o 158 1208 1258 1218 1240; g 170 1205 1278 1240 1222; o 180 1220 1280 1222 1275
o 190 1272 1330 1275 1325; g 201 1290 1340 1325 1303; o 213 1293 1308 1300 1302; g 225 1187 1238 1232 1200; o 232 1198 1270 1198 1248
g 244 1212 1260 1248 1250; g 256 1178 1252 1250 1190; g 264 1157 1195 1190 1183; g 275 1178 1190 1183 1183; o 287 1165 1220 1170 1205
g 299 1160 1222 1208 1190; g 307 1148 1195 1190 1157; g 318 1120 1165 1157 1150; g 330 1110 1152 1150 1120; o 342 1115 1138 1120 1135
g 350 1080 1112 1098 1088; g 362 1030 1100 1090 1068; o 373 1052 1097 1068 1085; g 381 1053 1097 1085 1068; g 393 992 1100 1070 1012
o 405 1008 1022 1012 1015; g 416 880 923 922 900; g 424 850 920 900 868; g 436 845 875 868 853; g 448 818 865 856 835; g 456 810 838 835 818
o 468 815 826 820 825; g 479 712 765 760 722; o 491 700 762 722 740; g 499 690 742 740 697; o 511 690 722 697 697; o 522 682 722 697 722
g 534 708 725 722 715; g 542 685 718 712 705; w 554 690 725 705 708; o 565 700 730 703 715; o 573 710 752 715 732; g 585 693 740 735 700
o 597 693 708 700 706` }
    ],
    drawings: level(1114, 998, '161.8%  ($4426.84)', CY) + dashed(868.7, 1008.6, 1344, 1008.6, CY) +
        line(53.6, 960, 315.3, 1146.3, ORG, 2.3, 'stroke-dasharray="10 16" marker-end="url(#arrow)"') +
        trend(379, 1149.5, 595, 1075.4) + trend(588.8, 1011, 746, 1223, 848, 1394.6) + trend(630, 1028, 872, 1263.7) +
        poly('50,971 348.5,1212.7 478.6,1004.6 868.7,1344', CY) +
        down(594, 954) + down(1018, 1004) + up(346, 1212.5) + up(866, 1344.5) +
        note(296, 1243, 'A', YEL, 1) + note(296, 1270.5, 'Impulsive', YEL, 1) + note(828, 1377.5, 'a', YEL) + note(816, 1403.5, 'Impulsive', YEL) +
        note(966, 954, 'corrective', YEL) + note(966, 980, 'b simple', YEL) +
        note(178, 1029.5, '4', GR, 1) + note(361, 1082, 'a', CY, 1) + note(406, 1085, '4', CY, 1) + note(392, 1168, 'b', CY, 1),
    yLabels: [[4450, 984], [4400, 1040], [4350, 1096.5], [4300, 1150], [4250, 1206], [4200, 1262], [4150, 1316], [4100, 1372]],
    xLabels: [['9/27', 118], ['10/2', 217], ['10/9', 390], ['10/12', 479], ['10/17', 577], ['10/20', 675], ['10/25', 772], ['11/1', 937], ['11/3', 1023], ['11/8', 1111], ['11/13', 1199], ['11/17', 1296]],
    badges: badge(1350, 1042, 66, 28, '4382', '#ff6a14') + badge(1350, 1182, 98, 28, '4256.61', '#bdbdbd') + badge(296, 1406, 56, 32, '9:30', '#bdbdbd')
});

render('p4', {
    symbol: '/MES', mode: 'pulse', tool: 'text', studies: true, on: ['C'],
    legend: [['/MES 5 D 42000t', 194], ['D: 10/26/23, 10:06 AM', 250], ['Y: 4256.61', 126]],
    box: { x: 1526, y: 864, r: 2816, b: 1404 }, right: 2938, tick: 6, thumb: [27, 838],
    days: [1690, 1880, 2095.7, 2272, 2446],
    runs: [
        { x: 1520, y: 900, sx: 1.0996, sy: 2.861, bars: `
y 18 1308 1378 1352 1320; g 33 1228 1333 1328 1260; o 46 1245 1373 1260 1340; o 62 1328 1400 1340 1363; o 78 1297 1378 1363 1374; g 93 1290 1390 1374 1311
o 107 1286 1378 1311 1340; g 122 1222 1360 1340 1243; g 137 1183 1250 1243 1190; o 152 1155 1223 1190 1190; o 166 1183 1236 1190 1214
o 181 1210 1246 1214 1225; o 196 1222 1327 1225 1266; g 211 1148 1286 1266 1168; o 225 1143 1217 1168 1190; o 240 1177 1297 1190 1266
g 255 1183 1298 1266 1202; o 271 1183 1270 1202 1207; o 285 1166 1215 1207 1213; o 300 1172 1245 1213 1237; g 315 1148 1240 1232 1150
g 330 1096 1183 1150 1100; g 344 1080 1143 1100 1083; g 359 1063 1120 1083 1070; o 375 1065 1120 1070 1116; o 389 1108 1138 1112 1121
o 403 1080 1178 1117 1157; g 418 1050 1193 1157 1065; g 433 1012 1108 1065 1030; g 449 960 1068 1030 962; g 462 953 1040 962 957
g 478 883 965 957 916; o 493 902 983 916 962; o 508 937 1028 962 1010; g 521 932 1018 1014 973; g 537 892 1028 973 904; o 552 898 1035 904 979
g 568 898 1040 979 910; g 581 822 925 910 842; g 596 800 868 842 830; o 612 817 862 830 853; g 627 835 860 853 837; g 640 730 845 842 733
g 655 650 753 733 653; g 671 622 668 653 648; g 686 565 653 648 613; y 700 582 640 613 613; g 715 520 627 613 527; o 730 497 565 527 527
o 743 503 552 527 545; g 759 478 548 545 487; g 775 440 490 487 441; g 789 416 463 441 424; o 803 420 448 424 436; o 818 400 483 436 441
o 834 428 485 465 453; g 850 308 460 453 310; g 862 280 343 316 298; g 878 208 315 298 217; o 893 170 248 217 241; o 908 204 290 241 275
g 922 234 302 275 264; g 937 188 285 264 201; g 952 148 210 201 173; o 968 155 210 173 178; o 982 132 195 178 184; o 997 170 228 184 196
o 1012 188 210 196 201; g 1027 155 228 196 166; o 1040 153 205 160 178; o 1056 142 203 178 184; o 1071 170 220 184 195; g 1086 153 204 196 184
o 1100 170 232 184 212; o 1116 210 280 212 247; g 1131 193 278 247 195; g 1146 165 226 195 184; o 1160 176 194 178 190` }
    ],
    drawings: line(1530.6, 864, 1530.6, 1404, '#8b1a1a', 2, 'stroke-dasharray="30 12.300" stroke-dashoffset="1"') +
        dashed(2164, 880.7, 2816, 880.7, '#ff5075') + dashed(1526, 1020.2, 2816, 1020.2, LAV) + dashed(1526, 1066.4, 2816, 1066.4, LAV) +
        level(1539, 1010, '23.6%  ($4351.45)', LAV) + level(1539, 1056, '38.2%  ($4326.52)', LAV) +
        line(2023, 1260, 2404, 954, LAV, 2.5, 'stroke-dasharray="40 16"') +
        trend(1951, 1210, 2330.8, 959, 2476, 863) + trend(1899, 1316, 2037.5, 1261.7, 2812, 957) +
        note(1643, 1244, 'a1', CY) + note(1643, 1270.5, 'simple', CY) + note(1858, 1352, 'b2', CY) + note(1858, 1378, 'complex', CY) +
        note(1937, 1204, '1', CY, 1) + note(2020, 1287, '2', CY, 1) +
        note(2286, 1164, 'ISince the larger fourth wave', '#d8d8d8') + note(2286, 1190, 'has kicked in I am looking', '#d8d8d8') +
        note(2286, 1216, 'to now short the market for', '#d8d8d8') + note(2286, 1242, ' the yellow line made off 1,2', '#d8d8d8') +
        remaining(2574, 1304, '42000', '41400'),
    yLabels: [[4400, 932], [4350, 1024], [4300, 1116], [4250, 1210], [4200, 1302], [4150, 1394]],
    xLabels: [['7:30', 1543], ['Tue', 1704], ['9:29', 1787], ['Wed', 1894], ['11:05', 1988], ['Thu', 2109], ['9:28', 2191], ['Fri', 2284], ['8:36', 2352], ['Sun', 2446], ['Mon', 2529], ['14:15', 2623]],
    badges: badge(2822, 950, 98, 28, '4380.75', '#ff6a14') + badge(2822, 1182, 98, 28, '4256.61', '#bdbdbd')
});

// page behind the window
document.getElementById('desktop-text').innerHTML = [
    ['la', 0, 50], ['pe', -3, 434], ['o', 0, 474], ['A', -9, 665], ['er', -9, 703],
    ['y', -2, 908], ['o', 1, 947], ['ta', -5, 1169], ['re', -6, 1207], ['s', 2, 1419]
].map(function (t) {
    return '<text x="' + t[1] + '" y="' + t[2] + '">' + t[0] + '</text>';
}).join('');
```
